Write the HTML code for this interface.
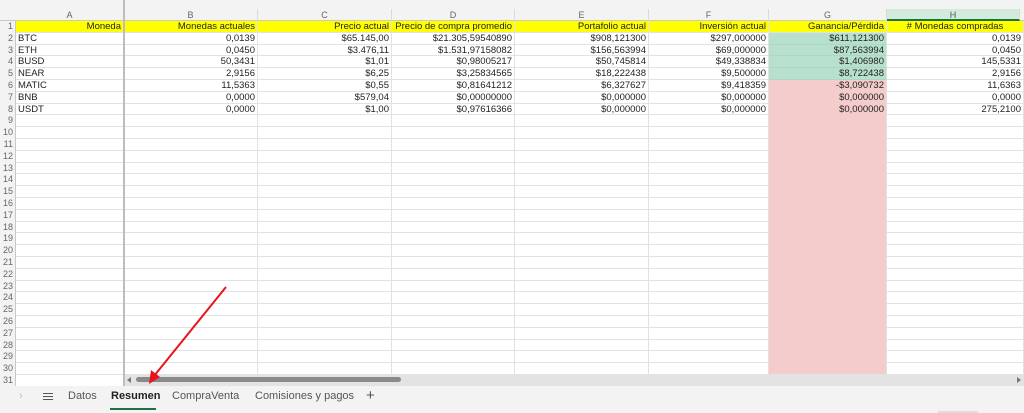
<!DOCTYPE html>
<html><head><meta charset="utf-8"><style>
*{margin:0;padding:0;box-sizing:border-box}
body{width:1024px;height:413px;overflow:hidden;background:#fff;font-family:"Liberation Sans",Arial,sans-serif;font-size:9.5px;color:#222;position:relative}
.top{position:absolute;left:0;top:0;width:1024px;height:21px;background:#f3f3f3;border-bottom:1px solid #c8c8c8}
.ch{position:absolute;top:9px;height:12px;line-height:12px;text-align:center;color:#666;font-size:9px;border-right:1px solid #dadada}
.rh{position:absolute;left:0;width:16px;background:#f3f3f3;color:#666;font-size:9px;text-align:right;padding-right:2px;border-right:1px solid #c8c8c8}
.c{position:absolute;height:11.8px;line-height:11px;border-right:1px solid #e2e2e2;border-bottom:1px solid #e2e2e2;padding:0 2px;white-space:nowrap;overflow:hidden}
</style></head><body>
<div class="top"></div>
<div class="ch" style="left:16px;width:108px">A</div>
<div class="ch" style="left:124px;width:134px">B</div>
<div class="ch" style="left:258px;width:134px">C</div>
<div class="ch" style="left:392px;width:123px">D</div>
<div class="ch" style="left:515px;width:134px">E</div>
<div class="ch" style="left:649px;width:120px">F</div>
<div class="ch" style="left:769px;width:118px">G</div>
<div class="ch" style="left:887px;width:133px;background:#d3ebdd;border-bottom:2px solid #1e7145;color:#555">H</div>
<div id="g"></div>
<script>
var L=[16,124,258,392,515,649,769,887,1024];
var d=[
["Moneda","Monedas actuales","Precio actual","Precio de compra promedio","Portafolio actual","Inversión actual","Ganancia/Pérdida","# Monedas compradas"],
["BTC","0,0139","$65.145,00","$21.305,59540890","$908,121300","$297,000000","$611,121300","0,0139"],
["ETH","0,0450","$3.476,11","$1.531,97158082","$156,563994","$69,000000","$87,563994","0,0450"],
["BUSD","50,3431","$1,01","$0,98005217","$50,745814","$49,338834","$1,406980","145,5331"],
["NEAR","2,9156","$6,25","$3,25834565","$18,222438","$9,500000","$8,722438","2,9156"],
["MATIC","11,5363","$0,55","$0,81641212","$6,327627","$9,418359","-$3,090732","11,6363"],
["BNB","0,0000","$579,04","$0,00000000","$0,000000","$0,000000","$0,000000","0,0000"],
["USDT","0,0000","$1,00","$0,97616366","$0,000000","$0,000000","$0,000000","275,2100"]];
var h="";
for(var r=0;r<31;r++){
 var t=21+r*11.8;
 h+='<div class="rh" style="top:'+t+'px;height:11.8px;line-height:11.8px">'+(r+1)+'</div>';
 for(var c=0;c<8;c++){
  var bg="",bc="";
  if(r==0)bg="#ffff00";else if(c==6){bg=(r<5?"#b7e1cd":"#f4cccc");bc=(r<5?"#acd8c3":"#f4cccc");}
  var txt=(r<8?d[r][c]:"");
  var al=(r==0?(c==7?"center":"right"):(c==0?"left":"right"));
  h+='<div class="c" style="left:'+L[c]+'px;top:'+t+'px;width:'+(L[c+1]-L[c])+'px;text-align:'+al+';'+(bg?'background:'+bg+';':'')+(bc?'border-bottom-color:'+bc+';':'')+'">'+txt+'</div>';
 }
}
document.getElementById("g").innerHTML=h;
</script>
<div style="position:absolute;left:123px;top:0;width:2px;height:386px;background:#bdbdbd"></div>
<div style="position:absolute;left:125px;top:374px;width:899px;height:12px;background:#e3e3e3"></div>
<div style="position:absolute;left:127px;top:377px;width:0;height:0;border-top:3px solid transparent;border-bottom:3px solid transparent;border-right:4px solid #777"></div>
<div style="position:absolute;left:1017px;top:377px;width:0;height:0;border-top:3px solid transparent;border-bottom:3px solid transparent;border-left:4px solid #777"></div>
<div style="position:absolute;left:136px;top:377px;width:265px;height:5px;border-radius:3px;background:#8a8a8a"></div>
<div style="position:absolute;left:0;top:386px;width:1024px;height:27px;background:#f3f3f3"></div>
<div style="position:absolute;left:19px;top:390px;color:#bbb;font-size:11px">›</div>
<div style="position:absolute;left:43px;top:393px;width:10px;height:1px;background:#555;box-shadow:0 3px 0 #555,0 6px 0 #555"></div>
<div style="position:absolute;left:68px;top:390px;font-size:11px;color:#555">Datos</div>
<div style="position:absolute;left:111px;top:390px;font-size:11px;color:#222;font-weight:bold">Resumen</div>
<div style="position:absolute;left:110px;top:408px;width:46px;height:2px;background:#1e7145"></div>
<div style="position:absolute;left:172px;top:390px;font-size:11px;color:#555">CompraVenta</div>
<div style="position:absolute;left:255px;top:390px;font-size:11px;color:#555">Comisiones y pagos</div>
<div style="position:absolute;left:366px;top:387px;font-size:15px;color:#555">+</div>
<div style="position:absolute;left:938px;top:411px;width:40px;height:2px;background:#ddd"></div>
<svg style="position:absolute;left:0;top:0" width="1024" height="413"><line x1="226" y1="287" x2="154" y2="376" stroke="#e8141b" stroke-width="2"/><polygon points="149,384 151,370 160,377" fill="#e8141b"/></svg>
</body></html>
